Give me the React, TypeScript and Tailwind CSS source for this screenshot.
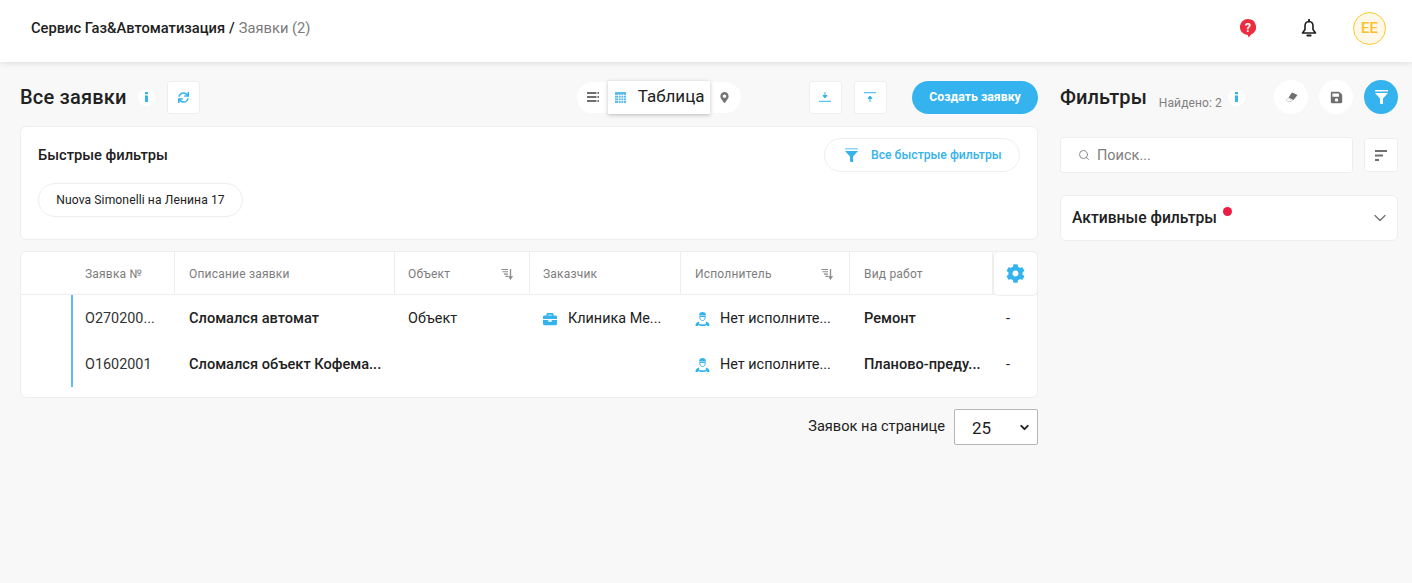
import React from 'react'
import { ChevronDown, Search } from 'lucide-react'
import { FaBriefcase, FaMapMarkerAlt, FaSave, FaCog, FaSync } from 'react-icons/fa'

const gridCols = 'grid grid-cols-[52px_102px_220px_135px_151px_169px_143px_1fr]'

function SortIcon() {
  return (
    <svg width="12" height="12" viewBox="0 0 12 12" className="text-[#8c8c8c]">
      <path d="M0.500 1.500h6.500M1.500 3.800h5.500M3 6.100h4M4.500 8.400h2.500" stroke="currentColor" strokeWidth="1.100" fill="none" />
      <path d="M9.500 1v9M7.600 8l1.900 2.800L11.400 8" stroke="currentColor" strokeWidth="1.300" fill="none" />
    </svg>
  )
}

function WorkerIcon() {
  return (
    <svg width="15" height="16" viewBox="0 0 15 16" className="text-[#35b3ee]">
      <path d="M4 4.500C4 2 5.500 1 7.500 1S11 2 11 4.500z" fill="currentColor" />
      <path d="M4.700 5.500h5.600c0 2.400-1 4-2.800 4s-2.800-1.600-2.800-4z" fill="none" stroke="currentColor" strokeWidth="1" />
      <path d="M0.500 15c0-2.500 1.200-3.800 3.500-4.500l.4 2.800h6.200l.4-2.800c2.300.7 3.500 2 3.500 4.500h-2.800v-1h-1.200v1H4.500v-1H3.300v1z" fill="currentColor" />
    </svg>
  )
}

function FunnelIcon({ size, band }: { size: number; band: string }) {
  return (
    <svg width={size} height={size * 1.15} viewBox="0 0 13 15" className="text-current">
      <path d="M0 0h13v1.500H0z" fill={band} />
      <path d="M0 3h13L8 8.500V15l-3-1.500v-5z" fill="currentColor" />
    </svg>
  )
}

function InfoBadge() {
  return (
    <div className="flex h-[17px] w-[17px] items-center justify-center rounded-full bg-white text-[#35b3ee]">
      <svg width="3" height="10" viewBox="0 0 3 10">
        <path d="M0 0h3v2.200H0zM0 3.500h3V10H0z" fill="currentColor" />
      </svg>
    </div>
  )
}

function SquareButton({ children }: { children: React.ReactNode }) {
  return (
    <button className="flex h-[33px] w-[33px] items-center justify-center rounded-[3px] border border-[#eeeeee] bg-white">
      {children}
    </button>
  )
}

function RoundButton({ children, active }: { children: React.ReactNode; active?: boolean }) {
  return (
    <button className={active ? 'flex h-[34px] w-[34px] items-center justify-center rounded-full bg-[#35b3ee] text-white' : 'flex h-[34px] w-[34px] items-center justify-center rounded-full bg-white text-[#6f6f6f]'}>
      {children}
    </button>
  )
}

function HeaderCell({ label, sort, pad }: { label: string; sort?: boolean; pad: string }) {
  return (
    <div className={`flex items-center justify-between border-r border-[#eeeeee] pr-[16px] pt-[1px] text-xs text-[#7d7d7d] ${pad}`}>
      <span className="tracking-[0.2px]">{label}</span>
      {sort && <SortIcon />}
    </div>
  )
}

const rows = [
  { id: 'O270200...', desc: 'Сломался автомат', object: 'Объект', client: 'Клиника Ме...', work: 'Ремонт' },
  { id: 'O1602001', desc: 'Сломался объект Кофема...', object: '', client: '', work: 'Планово-преду...' },
]

export default function App() {
  return (
    <div className="flex min-h-[583px] flex-col bg-[#f8f8f8] font-['Roboto',sans-serif] text-[#212121]">
      {/* Header */}
      <header className="flex h-[62px] items-center justify-between bg-white pb-[6px] pl-[31px] pr-[26px] shadow-[0_1px_6px_rgba(0,0,0,0.12)]">
        <div className="flex items-center gap-1 text-[14.700px] font-medium">
          <span>Сервис Газ&Автоматизация</span>
          <span>/</span>
          <span className="font-normal text-[#7b7b7b]">Заявки (2)</span>
        </div>
        <div className="flex items-center">
          <svg width="16" height="19" viewBox="0 0 16 19" className="mr-[45px]">
            <path d="M8 0a8 8 0 0 1 3.500 15.200L8.500 18.500 7.800 16A8 8 0 0 1 8 0z" fill="#ee2b3f" />
            <text x="8" y="12.500" textAnchor="middle" fontSize="12" fontWeight="700" fill="#fff" fontFamily="Roboto">?</text>
          </svg>
          <svg width="16" height="19" viewBox="0 0 16 19" className="mr-[36px]">
            <path d="M8 2.500c-2.700 0-4 2-4 4.500v3.500L1.500 14h13L12 10.500V7c0-2.500-1.300-4.500-4-4.500z" fill="none" stroke="#1c1c1c" strokeWidth="1.600" strokeLinejoin="round" />
            <path d="M8 .5v2M6.300 16.500h3.400" stroke="#1c1c1c" strokeWidth="1.800" strokeLinecap="round" />
          </svg>
          <div className="flex h-[33px] w-[33px] items-center justify-center rounded-full border border-[#fbc926] bg-[#fdf8e8] text-[15px] font-medium text-[#fbc02d]">
            EE
          </div>
        </div>
      </header>

      <main className="flex gap-[22px] pl-5 pr-[14px] pt-[18px]">
        {/* Left column */}
        <div className="flex w-[1018px] flex-col">
          <div className="flex h-[34px] items-center">
            <h1 className="text-xl font-medium leading-none tracking-[0.2px]">Все заявки</h1>
            <div className="ml-[11px]"><InfoBadge /></div>
            <div className="ml-[12px]">
              <SquareButton><FaSync size={11} className="text-[#35b3ee]" /></SquareButton>
            </div>

            {/* View switch */}
            <div className="relative ml-[377px] flex h-[31px] w-[164px] items-center justify-between rounded-full bg-white pl-[10px] pr-[11px]">
              <svg width="12" height="10" viewBox="0 0 12 10" className="text-[#6f6f6f]">
                <path d="M0 0h9.500v2H0zM10.500 0H12v2h-1.500zM0 4h9.500v2H0zM10.500 4H12v2h-1.500zM0 8h9.500v2H0zM10.500 8H12v2h-1.500z" fill="currentColor" />
              </svg>
              <FaMapMarkerAlt size={11} className="text-[#757575]" />
              <div className="absolute left-[31px] top-[-1px] flex h-[33px] w-[102px] items-center bg-white pl-[7px] shadow-[0_1px_4px_rgba(0,0,0,0.25)]">
                <svg width="11" height="11" viewBox="0 0 11 11" className="text-[#5bbcec]">
                  <path d="M0 0h11v11H0z" fill="currentColor" />
                  <path d="M0 3.500h11M0 6h11M0 8.500h11M3.500 2v9M6 2v9M8.500 2v9" stroke="#fff" strokeWidth="0.700" />
                </svg>
                <span className="ml-[12px] text-[17px]">Таблица</span>
              </div>
            </div>

            <div className="ml-[68px]">
              <SquareButton>
                <svg width="12" height="10" viewBox="0 0 12 10" className="text-[#35b3ee]">
                  <path d="M6 0v4.500M4 3.500 6 6l2-2.500z" stroke="currentColor" fill="currentColor" strokeWidth="1" />
                  <path d="M0 9.300h12" stroke="currentColor" strokeWidth="1" />
                </svg>
              </SquareButton>
            </div>
            <div className="ml-[12px]">
              <SquareButton>
                <svg width="12" height="10" viewBox="0 0 12 10" className="text-[#35b3ee]">
                  <path d="M6 10V5.500M4 6.500 6 4l2 2.500z" stroke="currentColor" fill="currentColor" strokeWidth="1" />
                  <path d="M0 .7h12" stroke="currentColor" strokeWidth="1" />
                </svg>
              </SquareButton>
            </div>
            <button className="ml-auto flex h-[33px] w-[126px] items-center justify-center rounded-full bg-[#35b3ee] text-[12.300px] font-bold text-white">
              Создать заявку
            </button>
          </div>

          {/* Quick filters */}
          <section className="mt-[12px] h-[114px] rounded-md border border-[#eeeeee] bg-white pl-[17px] pr-[17px] pt-[11px]">
            <div className="flex items-center justify-between">
              <h2 className="text-[14.700px] font-medium">Быстрые фильтры</h2>
              <button className="flex h-[34px] w-[196px] items-center rounded-full border border-[#eeeeee] pl-5 text-[12.200px] font-medium text-[#35b3ee]">
                <FunnelIcon size={13} band="#8fd3f5" />
                <span className="ml-[13px]">Все быстрые фильтры</span>
              </button>
            </div>
            <div className="mt-[11px] flex h-[34px] w-[205px] items-center justify-center rounded-full border border-[#eeeeee] text-[12.100px] tracking-[0.1px]">
              Nuova Simonelli на Ленина 17
            </div>
          </section>

          {/* Table */}
          <section className="relative mt-[11px] rounded-md border border-[#eeeeee] bg-white pb-[10px]">
            <div className={`${gridCols} h-[43px] border-b border-[#eeeeee]`}>
              <div />
              <HeaderCell label="Заявка №" pad="pl-3" />
              <HeaderCell label="Описание заявки" pad="pl-[14px]" />
              <HeaderCell label="Объект" sort pad="pl-[13px]" />
              <HeaderCell label="Заказчик" pad="pl-[13px]" />
              <HeaderCell label="Исполнитель" sort pad="pl-[14px]" />
              <HeaderCell label="Вид работ" pad="pl-[14px]" />
              <div />
            </div>
            <div className="absolute right-[-1px] top-[-1px] flex h-[45px] w-[45px] items-center justify-center rounded-md border border-[#eeeeee] bg-white">
              <FaCog size={19} className="text-[#35b3ee]" />
            </div>
            {rows.map((row) => (
              <div key={row.id} className={`${gridCols} h-[46px] items-center text-[14.400px] leading-5`}>
                <div className="h-full w-[52px] border-r-2 border-[#5fbcf2]" />
                <div className="pl-3 pt-[1px] text-[#333333]">{row.id}</div>
                <div className="pl-[14px] text-[14.600px] font-medium">{row.desc}</div>
                <div className="pl-[13px] pt-[1px]">{row.object}</div>
                <div className="flex items-center pl-[13px] pt-[1px]">
                  {row.client && <FaBriefcase size={14} className="text-[#35b3ee]" />}
                  {row.client && <span className="ml-[11px]">{row.client}</span>}
                </div>
                <div className="flex items-center pl-[14px] pt-[1px]">
                  <WorkerIcon />
                  <span className="ml-[10px]">Нет исполните...</span>
                </div>
                <div className="pl-[14px] text-[14.600px] font-medium">{row.work}</div>
                <div className="pl-[13px] pt-[1px]">-</div>
              </div>
            ))}
          </section>

          {/* Pagination */}
          <div className="mt-[11px] flex h-[36px] items-center justify-end">
            <span className="text-[14.600px]">Заявок на странице</span>
            <div className="ml-[9px] flex h-[36px] w-[84px] items-center justify-between rounded-[2px] border border-[#b5b5b5] bg-white pl-[17px] pr-[6px]">
              <span className="mt-[3px] text-[17px]">25</span>
              <ChevronDown size={13} strokeWidth={3.500} />
            </div>
          </div>
        </div>

        {/* Filters column */}
        <aside className="flex w-[338px] flex-col">
          <div className="flex h-[34px] items-center">
            <h2 className="text-xl font-medium leading-none tracking-[0.1px]">Фильтры</h2>
            <span className="ml-[12px] mt-[12px] text-xs tracking-[0.1px] text-[#808080]">Найдено: 2</span>
            <div className="ml-[6px]"><InfoBadge /></div>
            <div className="ml-auto flex items-center gap-[11px]">
              <RoundButton>
                <svg width="13" height="10" viewBox="0 0 13 10">
                  <path d="M7 0.500 12.500 3 8.500 8 3.500 5.500z" fill="#6f6f6f" />
                  <path d="M3 6 7.500 8.500 6.500 9.500H3L1 8z" fill="none" stroke="#c9c9c9" strokeWidth="0.800" />
                </svg>
              </RoundButton>
              <RoundButton><FaSave size={13} /></RoundButton>
              <RoundButton active><FunnelIcon size={13} band="#ffffff" /></RoundButton>
            </div>
          </div>
          <div className="mt-[23px] flex items-center justify-between">
            <div className="flex h-[36px] w-[293px] items-center rounded-[3px] border border-[#eeeeee] bg-white pl-[17px]">
              <Search size={12} className="text-[#8a8a8a]" />
              <span className="ml-[7px] mt-[1px] text-[14.500px] text-[#808080]">Поиск...</span>
            </div>
            <button className="flex h-[34px] w-[34px] items-center justify-center rounded-[3px] border border-[#eeeeee] bg-white">
              <svg width="12" height="11" viewBox="0 0 12 11" className="text-[#6f6f6f]">
                <path d="M0 1h12M0 5.500h8M0 10h4" stroke="currentColor" strokeWidth="1.800" />
              </svg>
            </button>
          </div>
          <div className="mt-[22px] flex h-[46px] items-center justify-between rounded-md border border-[#eeeeee] bg-white pl-[11px] pr-[7px]">
            <div className="relative text-[15.700px] font-medium">
              Активные фильтры
              <span className="absolute right-[-15px] top-[1px] h-[9px] w-[9px] rounded-full bg-[#ee1c43]" />
            </div>
            <ChevronDown size={20} strokeWidth={1.500} className="text-[#6f6f6f]" />
          </div>
        </aside>
      </main>
    </div>
  )
}
